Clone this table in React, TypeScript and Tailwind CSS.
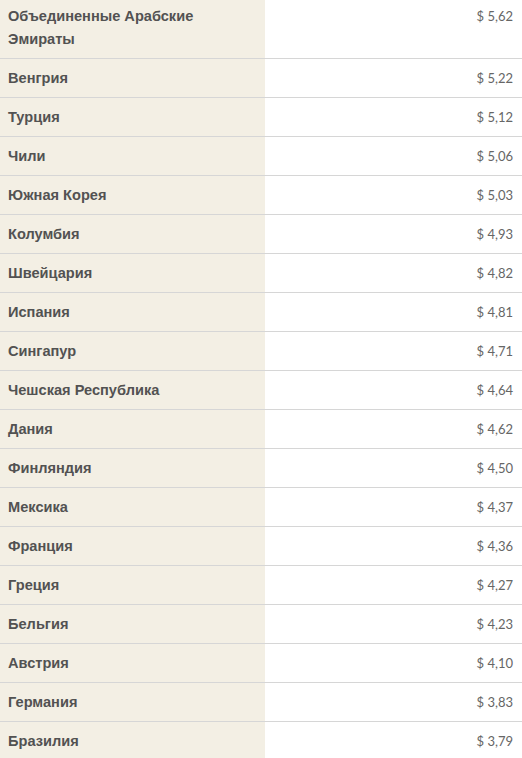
const rows: [string, string][] = [
  ['Объединенные Арабские Эмираты', '$ 5,62'],
  ['Венгрия', '$ 5,22'],
  ['Турция', '$ 5,12'],
  ['Чили', '$ 5,06'],
  ['Южная Корея', '$ 5,03'],
  ['Колумбия', '$ 4,93'],
  ['Швейцария', '$ 4,82'],
  ['Испания', '$ 4,81'],
  ['Сингапур', '$ 4,71'],
  ['Чешская Республика', '$ 4,64'],
  ['Дания', '$ 4,62'],
  ['Финляндия', '$ 4,50'],
  ['Мексика', '$ 4,37'],
  ['Франция', '$ 4,36'],
  ['Греция', '$ 4,27'],
  ['Бельгия', '$ 4,23'],
  ['Австрия', '$ 4,10'],
  ['Германия', '$ 3,83'],
  ['Бразилия', '$ 3,79'],
]

export default function App() {
  return (
    <div className="w-[522px] h-[758px] overflow-hidden bg-white">
      {rows.map(([country, price], i) => (
        <div
          key={country}
          className="grid grid-cols-[265px_1fr] border-b border-[#d6d6d6] leading-[23px]"
        >
          <div
            className={`bg-[#f3efe4] pl-[8px] pr-[40px] text-[14.6px] font-bold text-[#525252] font-['Liberation_Sans',Arial,sans-serif] ${
              i === 0 ? 'pt-[5px] pb-[7px]' : 'pt-[8px] pb-[7px]'
            }`}
          >
            {country}
          </div>
          <div
            className={`pr-[9px] text-right text-[13px] text-[#666666] font-['Lato',sans-serif] ${
              i === 0 ? 'pt-[5px]' : 'pt-[8px]'
            }`}
          >
            {price}
          </div>
        </div>
      ))}
    </div>
  )
}
